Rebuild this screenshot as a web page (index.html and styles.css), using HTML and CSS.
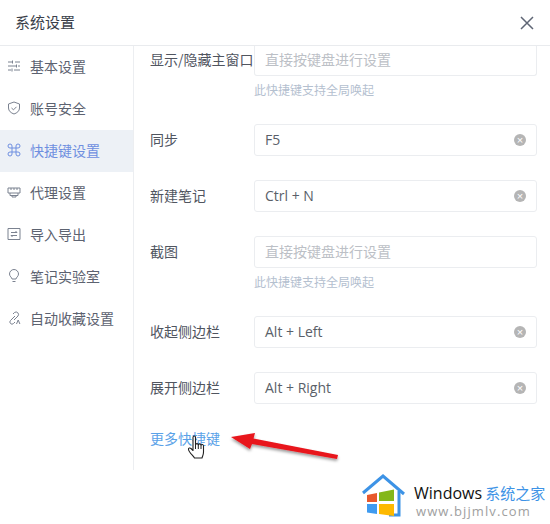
FILE: index.html
```html
<!DOCTYPE html>
<html lang="zh-CN">
<head>
<meta charset="utf-8">
<title>系统设置</title>
<link rel="stylesheet" href="styles.css">
</head>
<body>
<div class="dialog">
  <header class="head">
    <span class="title">系统设置</span>
    <svg class="close" width="16" height="16" viewBox="0 0 16 16"><path d="M2 2l12 12M14 2L2 14" stroke="#5f6675" stroke-width="1.5" fill="none"/></svg>
  </header>
  <div class="body">
    <nav class="side">
      <a class="item"><svg class="ic" viewBox="0 0 14 14"><path d="M1 3h4M8 3h5M1 7h8M11 7h2M1 11h3M7 11h6M5.500 1.500v3M9.500 5.500v3M5 9.500v3" stroke="#7b8290" fill="none"/></svg>基本设置</a>
      <a class="item"><svg class="ic" viewBox="0 0 14 14"><path d="M7 1l5.500 2v4c0 3-2.500 5-5.500 6-3-1-5.500-3-5.500-6V3zM4.500 7l2 1.800 3-3" stroke="#7b8290" fill="none"/></svg>账号安全</a>
      <a class="item active"><svg class="ic" viewBox="0 0 14 14"><path d="M5 5h4v4H5zM5 5V3a2 2 0 1 0-2 2h2M9 5V3a2 2 0 1 1 2 2H9M5 9v2a2 2 0 1 1-2-2h2M9 9v2a2 2 0 1 0 2-2H9" stroke="#6f8fe0" fill="none"/></svg>快捷键设置</a>
      <a class="item"><svg class="ic" viewBox="0 0 14 14"><path d="M1 3h12v5H1zM3 8v2.500h8V8M5 10.500V12h4v-1.500M4 3v2M7 3v2M10 3v2" stroke="#7b8290" fill="none"/></svg>代理设置</a>
      <a class="item"><svg class="ic" viewBox="0 0 14 14"><path d="M1 1.500h12v11H1zM4 5.500h6L8.500 4M10 8.500H4l1.500 1.500" stroke="#7b8290" fill="none"/></svg>导入导出</a>
      <a class="item"><svg class="ic" viewBox="0 0 14 14"><path d="M5 10c0-1.500-2.500-2.500-2.500-5a4.500 4.500 0 0 1 9 0c0 2.500-2.500 3.500-2.500 5zM5.500 12.500h3" stroke="#7b8290" fill="none"/></svg>笔记实验室</a>
      <a class="item"><svg class="ic" viewBox="0 0 14 14"><path d="M6 3l1.500-1.500a2.500 2.500 0 0 1 3.500 3.500L7 9M8 5l-4.500 4.500a2 2 0 0 0 3 3L8 11M9.500 13l1.700-4 1.700 4" stroke="#7b8290" fill="none"/></svg>自动收藏设置</a>
    </nav>
    <main class="content">
      <div class="row first">
        <label class="lab">显示/隐藏主窗口</label>
        <div class="field"><div class="box"><span class="ph">直接按键盘进行设置</span></div><p class="hint">此快捷键支持全局唤起</p></div>
      </div>
      <div class="row">
        <label class="lab">同步</label>
        <div class="field"><div class="box"><span>F5</span><i class="clear">×</i></div></div>
      </div>
      <div class="row">
        <label class="lab">新建笔记</label>
        <div class="field"><div class="box"><span>Ctrl + N</span><i class="clear">×</i></div></div>
      </div>
      <div class="row">
        <label class="lab">截图</label>
        <div class="field"><div class="box"><span class="ph">直接按键盘进行设置</span></div><p class="hint">此快捷键支持全局唤起</p></div>
      </div>
      <div class="row">
        <label class="lab">收起侧边栏</label>
        <div class="field"><div class="box"><span>Alt + Left</span><i class="clear">×</i></div></div>
      </div>
      <div class="row">
        <label class="lab">展开侧边栏</label>
        <div class="field"><div class="box"><span>Alt + Right</span><i class="clear">×</i></div></div>
      </div>
      <a class="more">更多快捷键</a>
    </main>
  </div>
</div>

<svg class="arrow" width="120" height="40" viewBox="0 0 120 40">
  <defs><filter id="sh" x="-20%" y="-50%" width="140%" height="200%"><feDropShadow dx="0" dy="2" stdDeviation="1.500" flood-color="#000" flood-opacity=".4"/></filter></defs>
  <path d="M5 5L29 1 27.500 6.500 112 23 111 27 26 12 24 17z" fill="#e8141c" filter="url(#sh)"/>
</svg>

<svg class="hand" width="20" height="28" viewBox="0 0 20 28">
  <path d="M6 2.500c0-2 2.500-2 2.500 0V10c.3-1.800 2.500-1.800 2.800 0 .3-1.500 2.500-1.500 2.700.3.500-1.300 2.500-1 2.500 .7v6c0 3-1 4-1.500 6H7.500C6.500 21 2 17.500 1.500 14.500c-.3-1.500 1.500-2 2.500-1l2 2z" fill="#fff" stroke="#222" stroke-width="1.100" stroke-linejoin="round"/>
  <path d="M8.500 10v4M11.300 10v4M14 10.300V14" stroke="#222" fill="none"/>
</svg>

<div class="mark">
  <svg class="house" width="46" height="46" viewBox="0 0 46 46">
    <path d="M2 19L22 2l21 18" fill="none" stroke="#3d93e6" stroke-width="3"/>
    <path d="M38 17v24H28" fill="none" stroke="#3d93e6" stroke-width="3"/>
    <path d="M8 22v6" stroke="#3d93e6" stroke-width="3"/>
    <path d="M6 21l10-2v9H6z" fill="#e8582c"/>
    <path d="M18 18.500l15-3V27H18z" fill="#84b71a"/>
    <path d="M6 30h10v10l-10-1.500z" fill="#3f9bf0"/>
    <path d="M18 30h15v12l-15-2z" fill="#fdb900"/>
  </svg>
  <div class="brand">
    <div class="brand-top">Windows <span class="brand-cn">系统之家</span></div>
    <div class="brand-url">www.bjjmlv.com</div>
  </div>
</div>
</body>
</html>
```

FILE: styles.css
```css
* { box-sizing: border-box; }
html, body { margin: 0; height: 100%; }
body {
  width: 550px;
  height: 524px;
  overflow: hidden;
  position: relative;
  background: #fff;
  font-family: "Noto Sans CJK SC", "Liberation Sans", sans-serif;
  color: #4a4f5a;
}
.dialog { display: flex; flex-direction: column; }
.head {
  height: 46px;
  border-bottom: 1px solid #e9ebee;
  display: flex;
  align-items: center;
  justify-content: space-between;
  padding: 0 15px 2px 15px;
}
.close { margin-top: 2px; }
.title { font-size: 15px; color: #3a3f4a; }
.body { display: flex; height: 424px; }
.side {
  width: 134px;
  border-right: 1px solid #eceef1;
  flex: none;
}
.item {
  height: 42px;
  display: flex;
  align-items: center;
  gap: 9px;
  padding: 0 0 2px 7px;
  font-size: 14px;
  color: #5c6270;
}
.item.active { background: #edf1f6; color: #6f8fe0; }
.ic { width: 14px; height: 14px; flex: none; }
.content { flex: 1; padding: 0 13px 0 16px; min-width: 0; overflow: hidden; }
.row { display: flex; margin-bottom: 24px; }
.row.first { margin-top: -2px; }
.row.first .box { border-top-color: transparent; }
.lab {
  width: 104px;
  flex: none;
  height: 32px;
  line-height: 30px;
  font-size: 14px;
  color: #50555f;
  white-space: nowrap;
}
.field { flex: 1; min-width: 0; }
.box {
  height: 32px;
  border: 1px solid #ebedf0;
  border-radius: 3px;
  display: flex;
  align-items: center;
  justify-content: space-between;
  padding: 0 10px 2px 10px;
  font-size: 14px;
  color: #5a5f69;
  font-family: "Open Sans", "Noto Sans CJK SC", sans-serif;
}
.ph { color: #bcc0c6; font-family: "Noto Sans CJK SC", sans-serif; }
.clear {
  width: 12px;
  height: 12px;
  margin-top: 2px;
  border-radius: 50%;
  background: #b5b5b5;
  color: #fff;
  font-style: normal;
  font-size: 11px;
  line-height: 12px;
  text-align: center;
  font-family: "Liberation Sans", sans-serif;
}
.hint {
  margin: 0;
  height: 24px;
  line-height: 28px;
  font-size: 12px;
  color: #b4c0cf;
}
.more {
  display: block;
  font-size: 14px;
  line-height: 20px;
  color: #5aa2e8;
}
.arrow { position: absolute; left: 226px; top: 432px; }
.hand { position: absolute; left: 187px; top: 435px; }
.mark {
  position: absolute;
  left: 361px;
  top: 474px;
  display: flex;
  gap: 7px;
}
.brand { padding-top: 9px; }
.brand-top { font: 500 16px/20px "Open Sans", sans-serif; color: #111; white-space: nowrap; word-spacing: -1px; }
.brand-cn { font-family: "Noto Sans CJK SC", sans-serif; font-weight: 400; font-size: 15px; color: #3d93e6; }
.brand-url { font: 13px/16px "Open Sans", sans-serif; letter-spacing: 1.100px; padding-left: 2px; color: #a0a0a0; white-space: nowrap; }
```
